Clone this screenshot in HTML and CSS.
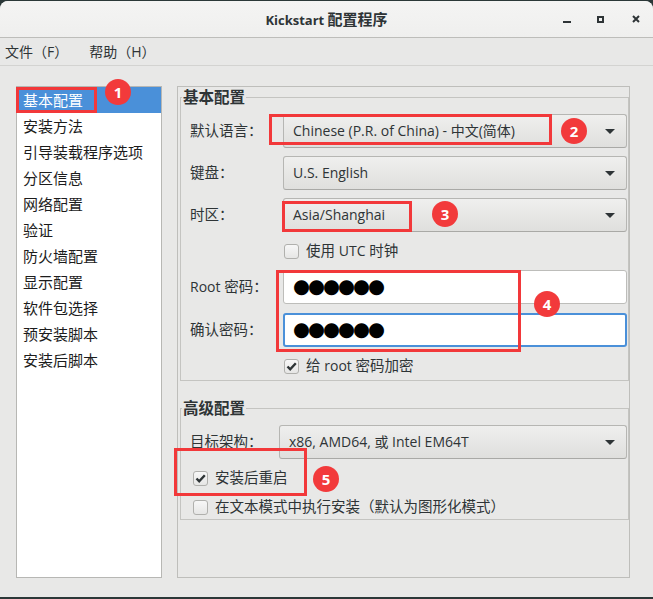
FILE: index.html
```html
<!DOCTYPE html>
<html lang="zh-CN">
<head>
  <meta charset="UTF-8">
  <meta name="viewport" content="width=device-width, initial-scale=1.0">
  <title>Kickstart 配置程序</title>
  <link rel="stylesheet" href="styles.css">
</head>
<body>
  <div class="window">
    <!-- 标题栏 -->
    <header class="titlebar">
      <span class="title">Kickstart <span class="title-cjk">配置程序</span></span>
      <svg class="controls" width="90" height="16" viewBox="0 0 90 16">
        <rect x="7" y="10" width="8" height="2" fill="#2e3436"/>
        <rect x="42" y="6" width="5" height="5" fill="none" stroke="#2e3436" stroke-width="2"/>
        <path d="M77 5 L83 11 M83 5 L77 11" stroke="#2e3436" stroke-width="2"/>
      </svg>
    </header>

    <!-- 菜单栏 -->
    <nav class="menubar">
      <span>文件（F）</span>
      <span>帮助（H）</span>
    </nav>

    <main class="content">
      <!-- 左侧分类列表 -->
      <ul class="sidebar">
        <li class="selected">基本配置</li>
        <li>安装方法</li>
        <li>引导装载程序选项</li>
        <li>分区信息</li>
        <li>网络配置</li>
        <li>验证</li>
        <li>防火墙配置</li>
        <li>显示配置</li>
        <li>软件包选择</li>
        <li>预安装脚本</li>
        <li>安装后脚本</li>
      </ul>

      <!-- 右侧配置面板 -->
      <section class="panel">
        <fieldset class="frame frame-basic">
          <legend>基本配置</legend>
          <div class="form-grid">
            <label class="field-label">默认语言：</label>
            <div class="combo">
              <span>Chinese (P.R. of China) - 中文(简体)</span>
              <i class="arrow"></i>
            </div>

            <label class="field-label">键盘：</label>
            <div class="combo"><span>U.S. English</span><i class="arrow"></i></div>

            <label class="field-label">时区：</label>
            <div class="combo"><span>Asia/Shanghai</span><i class="arrow"></i></div>

            <div class="check-row in-col">
              <span class="checkbox"></span>
              <span>使用 <span class="lat">UTC</span> 时钟</span>
            </div>

            <label class="field-label"><span class="lat">Root</span> 密码：</label>
            <div class="entry"><span class="dots">●●●●●●</span></div>

            <label class="field-label second-entry">确认密码：</label>
            <div class="entry focused second-entry"><span class="dots">●●●●●●</span></div>

            <div class="check-row in-col">
              <span class="checkbox checked">
                <svg width="13" height="13" viewBox="0 0 13 13"><path d="M2.5 6.5 L5.2 9.3 L10.8 3.2" fill="none" stroke="#2e3436" stroke-width="2.4"/></svg>
              </span>
              <span>给 <span class="lat">root</span> 密码加密</span>
            </div>
          </div>
        </fieldset>

        <fieldset class="frame frame-advanced">
          <legend>高级配置</legend>
          <div class="form-grid narrow">
            <label class="field-label">目标架构：</label>
            <div class="combo">
              <span>x86, AMD64, 或 Intel EM64T</span>
              <i class="arrow"></i>
            </div>

            <div class="check-row full">
              <span class="checkbox checked">
                <svg width="13" height="13" viewBox="0 0 13 13"><path d="M2.5 6.5 L5.2 9.3 L10.8 3.2" fill="none" stroke="#2e3436" stroke-width="2.4"/></svg>
              </span>
              <span>安装后重启</span>
            </div>

            <div class="check-row full tight">
              <span class="checkbox"></span>
              <span>在文本模式中执行安装（默认为图形化模式）</span>
            </div>
          </div>
        </fieldset>
      </section>
    </main>
  </div>

  <!-- 标注层：红框 + 编号 -->
  <div class="annotations">
    <div class="mark-box box-1"></div>
    <div class="mark-box box-2"></div>
    <div class="mark-box box-3"></div>
    <div class="mark-box box-4"></div>
    <div class="mark-box box-5"></div>
    <div class="badge badge-1">1</div>
    <div class="badge badge-2">2</div>
    <div class="badge badge-3">3</div>
    <div class="badge badge-4">4</div>
    <div class="badge badge-5">5</div>
  </div>
</body>
</html>
```

FILE: styles.css
```css
body {
  margin: 0;
  padding-top: 1px;
  height: 599px;
  box-sizing: border-box;
  overflow: hidden;
  background: #2b3838;
  font-family: "Open Sans", "Noto Sans CJK SC", sans-serif;
  color: #2e3436;
}

.window {
  height: 596px;
  display: flex;
  flex-direction: column;
  background: #e8e8e7;
  border-radius: 8px 8px 0 0;
  overflow: hidden;
}

/* 标题栏 */
.titlebar {
  height: 36px;
  display: grid;
  grid-template-columns: 1fr auto 1fr;
  align-items: center;
  background: linear-gradient(#f4f4f3, #efefee);
  border-bottom: 1px solid #bdbdba;
}
.title {
  grid-column: 2;
  font-size: 13px;
  font-weight: bold;
  line-height: 18px;
}
.title-cjk {
  font-size: 15px;
}
.controls {
  grid-column: 3;
  justify-self: end;
  margin-right: 7px;
}

/* 菜单栏 */
.menubar {
  height: 27px;
  display: flex;
  align-items: center;
  gap: 21px;
  padding-left: 5px;
  font-size: 14px;
  line-height: 18px;
  border-bottom: 1px solid #d3d3d1;
}

.content {
  flex: 1;
  display: flex;
  gap: 15px;
  padding: 20px 23px 19px 16px;
  min-height: 0;
}

/* 左侧列表 */
.sidebar {
  width: 146px;
  box-sizing: border-box;
  margin: 0;
  padding: 0;
  list-style: none;
  background: #fff;
  border: 1px solid #b7b7b4;
  font-size: 15px;
}
.sidebar li {
  height: 26px;
  line-height: 26px;
  padding-left: 6px;
  color: #1c1c1c;
}
.sidebar li.selected {
  background: #4a90d9;
  color: #fff;
}

/* 右侧面板 */
.panel {
  width: 453px;
  box-sizing: border-box;
  padding: 1px 0 0 2px;
  border: 1px solid #bebebb;
}

.frame {
  margin: 0;
  min-width: 0;
  width: 449px;
  box-sizing: border-box;
  padding: 8px 1px 3px 9px;
  border: 1px solid #c4c4c1;
}
.frame legend {
  margin-left: -8px;
  padding: 0 1px;
  font-size: 15.5px;
  font-weight: bold;
  line-height: 18px;
}
.frame-advanced {
  margin-top: 18px;
  padding-bottom: 1px;
}

.form-grid {
  display: grid;
  grid-template-columns: 93px 1fr;
  row-gap: 8px;
  align-items: center;
  line-height: 18px;
}
.form-grid.narrow {
  grid-template-columns: 89px 1fr;
}

.field-label {
  font-size: 14.5px;
  color: #2e3436;
}
.lat {
  font-size: 14px;
}

.combo {
  height: 34px;
  box-sizing: border-box;
  display: flex;
  align-items: center;
  justify-content: space-between;
  padding: 0 11px 0 9px;
  font-size: 14px;
  background: linear-gradient(#efefee, #dfdfdd);
  border: 1px solid #b6b6b3;
  border-bottom-color: #a9a9a6;
  border-radius: 3px;
}
.arrow {
  width: 0;
  height: 0;
  border-left: 5px solid transparent;
  border-right: 5px solid transparent;
  border-top: 5px solid #2e3436;
}

.entry {
  height: 34px;
  box-sizing: border-box;
  display: flex;
  align-items: center;
  padding-left: 9px;
  background: #fff;
  border: 1px solid #bdbdba;
  border-radius: 3px;
}
.entry.focused {
  border: 2px solid #4a90d9;
  padding-left: 8px;
}
.second-entry {
  margin-top: 1px;
}
.dots {
  font-family: "DejaVu Sans", sans-serif;
  font-size: 19.5px;
  letter-spacing: -2px;
  line-height: 20px;
  color: #000;
}

.check-row {
  height: 22px;
  display: flex;
  align-items: center;
  gap: 7px;
  font-size: 14.5px;
}
.check-row.in-col {
  grid-column: 2;
  padding-left: 1px;
}
.check-row.full {
  grid-column: 1 / 3;
  padding-left: 3px;
}
.check-row.tight {
  margin-top: -1px;
}

.checkbox {
  width: 15px;
  height: 15px;
  box-sizing: border-box;
  display: flex;
  align-items: center;
  justify-content: center;
  background: linear-gradient(#f7f7f7, #e6e6e5);
  border: 1px solid #b0b0ad;
  border-radius: 3px;
}

/* 标注 */
.annotations {
  position: absolute;
  inset: 0;
  pointer-events: none;
}
.mark-box {
  position: absolute;
  box-sizing: border-box;
  border: 3px solid #f2383a;
}
.box-1 { left: 16px;  top: 87px;  width: 81px;  height: 26px; }
.box-2 { left: 269px; top: 114px; width: 283px; height: 31px; }
.box-3 { left: 282px; top: 201px; width: 130px; height: 31px; }
.box-4 { left: 276px; top: 270px; width: 245px; height: 82px; }
.box-5 { left: 174px; top: 448px; width: 133px; height: 48px; }

.badge {
  position: absolute;
  width: 26px;
  height: 26px;
  border-radius: 50%;
  background: #f23a3b;
  color: #fff;
  font-size: 15px;
  font-weight: bold;
  line-height: 26px;
  text-align: center;
}
.badge-1 { left: 105px; top: 79px; }
.badge-2 { left: 561px; top: 118px; }
.badge-3 { left: 432px; top: 201px; }
.badge-4 { left: 534px; top: 291px; }
.badge-5 { left: 313px; top: 466px; }
```
